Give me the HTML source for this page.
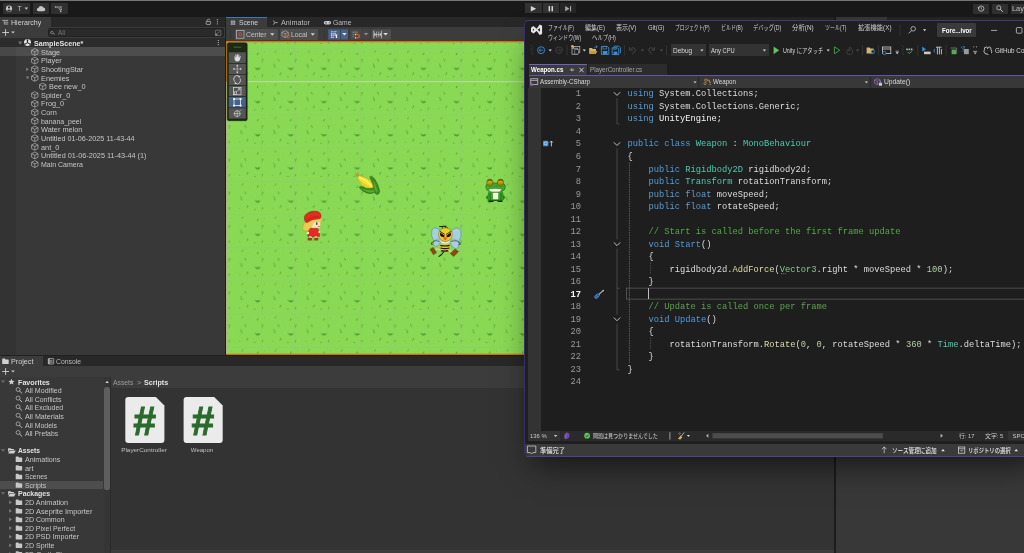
<!DOCTYPE html>
<html lang="ja"><head><meta charset="utf-8"><title>Unity - SampleScene / Visual Studio - Weapon.cs</title>
<style>
html,body{margin:0;padding:0;background:#383838;}
body{width:1024px;height:553px;overflow:hidden;}
#root{position:relative;width:1024px;height:553px;overflow:hidden;background:#383838;font-family:"Liberation Sans","Noto Sans CJK JP",sans-serif;}
.b{position:absolute;box-sizing:border-box;}
.t{position:absolute;white-space:pre;display:block;}
.u{font-family:"Liberation Sans","Noto Sans CJK JP",sans-serif;}
.v{font-family:"Liberation Sans","Noto Sans CJK JP",sans-serif;}
.m{font-family:"Liberation Mono","Noto Sans CJK JP",monospace;}
svg{position:absolute;overflow:visible;}
#txt{position:absolute;left:0;top:0;width:1024px;height:553px;will-change:transform;}

</style></head>
<body>
<div id="root">
<div class="b " style="left:0px;top:0px;width:1024px;height:17px;background:#191919;"></div>
<div class="b " style="left:0px;top:0px;width:1024px;height:1px;background:#767676;"></div>
<div class="b " style="left:2.9px;top:3.4px;width:27.1px;height:10.3px;background:#303030;border-radius:1px;"></div>
<div class="b " style="left:33px;top:3.4px;width:15.799999999999997px;height:10.3px;background:#303030;border-radius:1px;"></div>
<div class="b " style="left:51.3px;top:3.4px;width:16.299999999999997px;height:10.3px;background:#303030;border-radius:1px;"></div>
<div class="b " style="left:525.3px;top:3.4px;width:16.90000000000009px;height:10px;background:#323232;"></div>
<div class="b " style="left:542.9px;top:3.4px;width:16.399999999999977px;height:10px;background:#333333;"></div>
<div class="b " style="left:559.8px;top:3.4px;width:16.5px;height:10px;background:#262626;"></div>
<div class="b " style="left:973px;top:3.5px;width:16px;height:10.1px;background:#303030;border-radius:1px;"></div>
<div class="b " style="left:991.7px;top:3.5px;width:16.09999999999991px;height:10.1px;background:#303030;border-radius:1px;"></div>
<div class="b " style="left:1010.6px;top:3.5px;width:19.399999999999977px;height:10.1px;background:#303030;border-radius:1px;"></div>
<div class="b " style="left:0px;top:17px;width:225.5px;height:338px;background:#383838;"></div>
<div class="b " style="left:0px;top:17px;width:225.5px;height:10px;background:#282828;"></div>
<div class="b " style="left:0px;top:17px;width:51px;height:10px;background:#3c3c3c;"></div>
<div class="b " style="left:0px;top:27px;width:225.5px;height:11px;background:#3c3c3c;"></div>
<div class="b " style="left:48.3px;top:28.3px;width:176.2px;height:8.4px;background:#2a2a2a;border-radius:1.5px;border:0.5px solid #212121;"></div>
<div class="b " style="left:0px;top:38px;width:225.5px;height:8.6px;background:#2c2c2c;"></div>
<div class="b " style="left:0px;top:46.6px;width:15.6px;height:308.2px;background:#333333;"></div>
<div class="b " style="left:0px;top:46.6px;width:225.5px;height:9.2px;background:#4d4d4d;"></div>
<div class="b " style="left:0px;top:46.6px;width:15.6px;height:9.2px;background:#484848;"></div>
<div class="b " style="left:225.3px;top:17px;width:0.9px;height:338px;background:#1e1e1e;"></div>
<div class="b " style="left:226px;top:17px;width:610px;height:10px;background:#282828;"></div>
<div class="b " style="left:226px;top:17px;width:41px;height:10px;background:#3c3c3c;border-top:1px solid #3b78b8;"></div>
<div class="b " style="left:226px;top:26.7px;width:610px;height:14.4px;background:#3c3c3c;"></div>
<div class="b " style="left:234.5px;top:29.3px;width:43.1px;height:10.3px;background:#4e4e4e;border-radius:1px;"></div>
<div class="b " style="left:279.5px;top:29.3px;width:38.1px;height:10.3px;background:#4e4e4e;border-radius:1px;"></div>
<div id="scene" class="b" style="left:226px;top:41px;width:610px;height:314.2px;overflow:hidden;background:#8ad954;"><svg width="610" height="314.2" viewBox="226 41 610 314.2" style="left:0;top:0;"><defs><pattern id="grass" patternUnits="userSpaceOnUse" x="194.64999999999998" y="14.849999999999994" width="33.15" height="33.2"><rect width="33.2" height="33.2" fill="#8ad954"/><path d="M27 19.2 L28.6 21.4 L29.1 19.8 L29.9 21.8 L30.7 19.9 L31.2 21.5 L32.3 19.4" fill="none" stroke="#3d8a28" stroke-width="0.75" stroke-opacity="0.8"/><path d="M28.2 21.3 L31.4 21.3" stroke="#3d8a28" stroke-width="0.8" stroke-opacity="0.45"/><path d="M15.05 2.86 L14.25 4.34" stroke="#3d8a28" stroke-width="0.8" stroke-opacity="0.69" stroke-linecap="round"/><path d="M30.27 5.06 L29.53 6.54" stroke="#3d8a28" stroke-width="0.9" stroke-opacity="0.78" stroke-linecap="round"/><path d="M0.77 10.98 L1.33 12.22" stroke="#3d8a28" stroke-width="0.7" stroke-opacity="0.55" stroke-linecap="round"/><path d="M2.37 11.22 L1.63 12.58" stroke="#3d8a28" stroke-width="0.7" stroke-opacity="0.55" stroke-linecap="round"/><path d="M1.36 13.1 L1.24 14.1" stroke="#3d8a28" stroke-width="0.7" stroke-opacity="0.55" stroke-linecap="round"/><path d="M17.23 11.01 L17.97 12.99" stroke="#3d8a28" stroke-width="0.9" stroke-opacity="0.69" stroke-linecap="round"/><path d="M12.79 15.78 L13.41 17.02" stroke="#3d8a28" stroke-width="0.8" stroke-opacity="0.64" stroke-linecap="round"/><path d="M13.66 17.71 L13.84 19.39" stroke="#3d8a28" stroke-width="0.9" stroke-opacity="0.74" stroke-linecap="round"/><path d="M20.05 24.77 L19.25 26.63" stroke="#3d8a28" stroke-width="0.9" stroke-opacity="0.74" stroke-linecap="round"/><path d="M1.75 26.57 L1.25 28.43" stroke="#3d8a28" stroke-width="0.8" stroke-opacity="0.64" stroke-linecap="round"/><path d="M11.27 27.6 L12.13 27.6" stroke="#3d8a28" stroke-width="0.7" stroke-opacity="0.37" stroke-linecap="round"/><circle cx="27.1" cy="28.6" r="0.6" fill="#3d8a28" fill-opacity="0.85"/><circle cx="3.6" cy="3.9" r="0.5" fill="#3d8a28" fill-opacity="0.35"/><circle cx="22" cy="5.8" r="0.45" fill="#3d8a28" fill-opacity="0.3"/><circle cx="24.2" cy="14.2" r="0.45" fill="#3d8a28" fill-opacity="0.2"/><path d="M0 0.45 H33.2 M0.45 0 V33.2" stroke="#8cbe8c" stroke-opacity="0.33" stroke-width="0.9"/></pattern></defs><rect x="226" y="41" width="610" height="315" fill="url(#grass)"/><path d="M226 81.7 H836" stroke="#e8f5d8" stroke-opacity="0.55" stroke-width="0.9"/><path d="M226 41.6 H836" stroke="#e0690a" stroke-width="1.3"/><path d="M226 354.5 H836" stroke="#e0690a" stroke-width="1.3"/><path d="M226.4 41 V81.7" stroke="#e88a10" stroke-width="1.2"/><path d="M226.4 81.7 V354" stroke="#d9dc9a" stroke-width="1.1"/><path d="M225.9 41 V355" stroke="#2a2018" stroke-width="0.5"/><g id="girl">
<path d="M302.6 228.6 Q302.8 223.4 307.4 220.4 L312.4 219 L312.8 227 L309.4 229.6 Q307.6 230.2 307.2 231.2 Q303.6 231.4 302.6 228.6 Z" fill="#e9cb55" stroke="#c09a30" stroke-width="0.5"/>
<path d="M310.6 221.6 H320 Q320.8 225.4 319.4 228 L317 228.6 H312.6 Q310 226 310.6 221.6 Z" fill="#f8dfc2"/>
<path d="M309.8 221 L320.4 217.4 Q321.6 220.4 320.6 223.6 L319.2 221.2 Q315.4 220.6 313.2 223.4 Q312.8 226.4 311.4 227.4 Q309.6 225 309.8 221 Z" fill="#e9cb55"/>
<path d="M304.6 219.6 Q303.6 214.4 309 212.4 Q313.4 210.4 317.6 211.6 Q321.6 213 320.8 217.4 Q320.6 218.8 318.6 218.8 Q312 218.6 307.2 222.6 Q305 222.6 304.6 219.6 Z" fill="#e62a20" stroke="#9c1410" stroke-width="0.6"/>
<path d="M306.6 220.6 Q311.6 216.6 318.6 216.4" fill="none" stroke="#b01810" stroke-width="0.7"/>
<path d="M308.6 212.8 L310 211.4 L311.6 212.2 L310.2 213.4 Z" fill="#2f7a1c"/>
<rect x="316" y="222.2" width="1.5" height="2.7" rx="0.6" fill="#38466e"/>
<circle cx="318.9" cy="226.4" r="0.7" fill="#e0402c"/>
<path d="M310.2 228.4 L317.6 228.2 Q319.8 232 319.6 236.2 Q313.6 237.6 307.6 236.2 Q307.8 232 310.2 228.4 Z" fill="#e62a20" stroke="#a81812" stroke-width="0.5"/>
<circle cx="307.9" cy="232.9" r="1.2" fill="#fbeee0"/><circle cx="319.3" cy="231.9" r="1" fill="#fbeee0"/>
<rect x="309" y="236.4" width="2.6" height="1.6" fill="#f6efe6"/><rect x="314.6" y="236.4" width="2.6" height="1.6" fill="#f6efe6"/>
<path d="M307.4 238 Q309.6 237 312.2 238 L311.8 240.4 H308 Z" fill="#874a1c"/>
<path d="M314.2 238 Q316.4 237 318.4 238 L318 240.4 H314.6 Z" fill="#874a1c"/>
</g><g id="corn">
<path d="M355.2 172.8 L358.4 176 M357.6 172.6 L358.8 176 M355.2 175.4 L358.2 176.6" stroke="#c07a1e" stroke-width="0.8"/>
<path d="M369.7 176.8 L372 176.6 L374.6 178.8 Q378.6 184.6 379.8 191.6 Q379.4 194 377 194.6 Q375.4 194.2 374.4 192.4 Q370.4 194.4 366.6 193 Q361.6 191 359.2 187.4 L360 186.4 L367 187.4 L372.6 186.4 Q372.4 181.4 369.7 176.8 Z" fill="#3e8c20" stroke="#25601a" stroke-width="0.5"/>
<path d="M371.6 178.6 Q376.4 184.6 377.6 192.6 Q375.6 191 374.6 189 Q374.6 183 371.6 178.6 Z" fill="#58ae30"/>
<path d="M361.4 188.4 Q367.6 191.4 373.6 190.2 L374.2 192 Q367.6 193.4 361.4 188.4 Z" fill="#58ae30"/>
<path d="M357.6 176.6 Q358.6 175.4 361 176 Q367 177.6 370.4 180.8 Q373.4 184.4 373.2 187.4 Q370 188.6 366 187.8 Q361.4 185.6 359 181.4 Q357.4 178.6 357.6 176.6 Z" fill="#f3e32c" stroke="#b89018" stroke-width="0.5"/>
<path d="M359.6 177.4 Q366.6 179.8 371.6 186.6" stroke="#fbf6b0" stroke-width="1" fill="none"/>
<path d="M359.4 180.6 Q363.4 184.8 369 187" stroke="#d6b41e" stroke-width="0.8" fill="none"/>
</g><g id="frog">
<path d="M488.6 199.8 H502.4 V201.9 H497.6 V201 H493.4 V201.9 H488.6 Z" fill="#0c260c"/>
<circle cx="487.2" cy="197.4" r="1.3" fill="#2a8a1e"/><circle cx="503.8" cy="197.4" r="1.3" fill="#2a8a1e"/>
<path d="M489.6 190.4 Q487.6 194.6 487.6 198.4 Q487.6 200.4 489.4 200.4 H501.8 Q503.6 200.4 503.6 198.4 Q503.6 194.6 501.6 190.4 Z" fill="#36a424" stroke="#1c6414" stroke-width="0.6"/>
<path d="M485.9 186.9 Q485.9 183.2 490 183 H501 Q505.3 183.2 505.3 186.9 Q505.3 190.8 501 191 H490 Q485.9 190.8 485.9 186.9 Z" fill="#3cae28" stroke="#1c6414" stroke-width="0.6"/>
<rect x="486.9" y="179.3" width="5.8" height="6.6" rx="2.4" fill="#c9a212" stroke="#3c4a10" stroke-width="0.6"/>
<rect x="497.6" y="179.3" width="5.8" height="6.6" rx="2.4" fill="#c9a212" stroke="#3c4a10" stroke-width="0.6"/>
<path d="M487.6 183.4 H492 V184.4 Q489.8 186 487.6 184.4 Z M498.4 183.4 H502.8 V184.4 Q500.6 186 498.4 184.4 Z" fill="#a07c0a"/>
<path d="M487.8 180.6 Q489.8 179 491.8 180.6 M498.6 180.6 Q500.6 179 502.6 180.6" stroke="#2a3a10" stroke-width="0.8" fill="none"/>
<path d="M494.4 185.6 V186.8 M496.4 185.6 V186.8" stroke="#1c6414" stroke-width="0.5"/>
<path d="M488.7 189 Q495.3 187.9 501.8 189 Q501.6 191.9 498.4 191.9 H492 Q488.9 191.9 488.7 189 Z" fill="#f6f4e2" stroke="#1c6414" stroke-width="0.4"/>
<rect x="492.9" y="192.8" width="5.3" height="6.4" rx="0.4" fill="#fbfbe8"/>
<path d="M490.2 193 Q489.6 197 490.6 200.2 M500.9 193 Q501.6 197 500.6 200.2" stroke="#1c6414" stroke-width="0.7" fill="none"/>
</g><g id="bee">
<path d="M439.2 229.6 Q434 225.6 431.8 230.4 Q430.6 236.4 433.6 240.6 Q432.6 245.4 435.4 246.6 Q438.8 246.8 440.6 242 Z" fill="#a8d0dc" stroke="#4c8aa4" stroke-width="0.6"/>
<path d="M452 230 Q457.8 225.6 460.6 230.4 Q462.4 236.4 458.8 241.4 Q459.6 247.4 456.4 248.8 Q451.8 248 450.2 242.4 Z" fill="#a8d0dc" stroke="#4c8aa4" stroke-width="0.6"/>
<path d="M434.4 240.6 Q437.2 237.4 440 240 M457.4 240.6 Q454 237.4 450.6 240" fill="none" stroke="#6a8a9a" stroke-width="0.5"/>
<path d="M439.2 226.6 L446.6 226.2 M441.8 226.6 L443.2 229.4 M445.4 226.2 L445.6 229.4 M447 227 L447.4 229.4" stroke="#151515" stroke-width="0.9" fill="none"/>
<ellipse cx="445.4" cy="234.6" rx="6.9" ry="6.8" fill="#f0cc20" stroke="#7a6410" stroke-width="0.5"/>
<path d="M440 232.4 L444.6 235.6 L444.2 237.2 Q441.4 237.4 440.2 235.6 Z M451 232.4 L446.4 235.6 L446.8 237.2 Q449.6 237.4 450.8 235.6 Z" fill="#121212"/>
<path d="M440 231.4 L444.8 234.4 M451 231.4 L446.2 234.4" stroke="#121212" stroke-width="0.8"/>
<circle cx="445.2" cy="238.4" r="1.7" fill="#f2642a"/>
<path d="M439.8 239 Q440.6 241.4 443.4 241.8 Q445.4 242.6 447.4 241.8 Q449.8 241.4 450.4 239 Q451 243.6 445.2 244 Q439.4 243.6 439.8 239 Z" fill="#f6f6f2" stroke="#a8a8a0" stroke-width="0.4"/>
<path d="M440.4 243.8 Q445 245 449.4 243.8 Q450 248 448 251.8 Q444.6 253 441.6 251.6 Q439.8 248 440.4 243.8 Z" fill="#e9c42a"/>
<path d="M440.4 245.4 Q445 246.6 449.6 245.4 M440.4 248 Q445 249.2 449.4 248 M441.2 250.6 Q444.6 251.6 448.4 250.6" stroke="#161616" stroke-width="1.2" fill="none"/>
<path d="M439.6 241.4 Q433 239.4 432.2 243.4 M450.8 241.4 Q458.4 239.4 459.4 243.4" stroke="#303030" stroke-width="0.7" fill="none"/>
<path d="M431.4 242.2 V244.4 H433 M460.2 242.2 V244.4 H458.6" stroke="#303030" stroke-width="0.7" fill="none"/>
<path d="M440.6 250 L436.6 248.8 L435.4 250 M448.8 250.4 L452 251.4 L452.8 253" stroke="#ecd68a" stroke-width="1.1" fill="none"/>
<path d="M430 249.2 L433.2 247.4 L436.6 252.6 L433.4 254.8 Z" fill="#8a4a14" stroke="#5a2e0a" stroke-width="0.4"/>
<path d="M450.2 253.4 L455 249 L458.6 251.6 L453.6 256.6 Z" fill="#8a4a14" stroke="#5a2e0a" stroke-width="0.4"/>
<path d="M443.6 252 L441 255 L438.6 256.6" stroke="#161616" stroke-width="1.1" fill="none"/>
</g><rect x="227.2" y="42.8" width="20" height="77.9" rx="1.6" fill="#1c2a13" stroke="#141c0e" stroke-width="0.5"/><rect x="233.6" y="46.6" width="7.6" height="1.2" fill="#46573a"/><rect x="228.8" y="52.3" width="17" height="10.8" fill="#555555"/><rect x="228.8" y="63.8" width="17" height="10.3" fill="#555555"/><rect x="228.8" y="74.7" width="17" height="10.4" fill="#555555"/><rect x="228.8" y="85.8" width="17" height="10.5" fill="#555555"/><rect x="228.8" y="97" width="17" height="10.5" fill="#44628a"/><rect x="228.8" y="108.2" width="17" height="10.4" fill="#555555"/><path d="M234.4 56.6 L234.8 60.2 Q237 62.6 239.6 60.6 L240.8 56.4 L240 56 L239.4 58 L239.2 54.6 L238.4 54.6 L238.2 57.6 L237.6 54 L236.8 54 L236.8 57.6 L236 54.6 L235.2 54.8 L235.8 58.6 L235 56.4 Z" fill="#dcdcdc"/><path d="M237.3 65.6 V72.4 M233.8 69 H240.8" stroke="#dcdcdc" stroke-width="0.45"/><path d="M237.3 64.6 L238.5 66.2 H236.1 Z M237.3 73.4 L238.5 71.8 H236.1 Z M232.8 69 L234.4 67.8 V70.2 Z M241.8 69 L240.2 67.8 V70.2 Z" fill="#dcdcdc"/><path d="M234.6 81.6 A3.2 3.6 0 0 1 239.2 76.6 M240 78.4 A3.2 3.6 0 0 1 235.4 83.2" fill="none" stroke="#dcdcdc" stroke-width="0.8"/><path d="M238.4 75.6 L240.4 76.6 L238.8 78 Z M236.2 84.2 L234.2 83.2 L235.8 81.8 Z" fill="#dcdcdc"/><rect x="233.6" y="87.4" width="7.4" height="7.4" fill="none" stroke="#dcdcdc" stroke-width="0.7"/><rect x="234.3" y="91.8" width="2.4" height="2.4" fill="none" stroke="#dcdcdc" stroke-width="0.6"/><path d="M236.8 91.6 L239.8 88.6 M238 88.6 H239.8 V90.4" fill="none" stroke="#dcdcdc" stroke-width="0.7"/><rect x="234" y="99" width="6.6" height="6.6" fill="none" stroke="#ffffff" stroke-width="0.7"/><rect x="233.1" y="98.1" width="1.8" height="1.8" fill="#ffffff"/><rect x="233.1" y="104.69999999999999" width="1.8" height="1.8" fill="#ffffff"/><rect x="239.7" y="98.1" width="1.8" height="1.8" fill="#ffffff"/><rect x="239.7" y="104.69999999999999" width="1.8" height="1.8" fill="#ffffff"/><circle cx="237.2" cy="113.6" r="2.9" fill="none" stroke="#dcdcdc" stroke-width="0.6"/><path d="M237.2 110 V117.2 M233.6 113.6 H240.8 M239.4 111.4 L241.2 109.6" stroke="#dcdcdc" stroke-width="0.6" fill="none"/></svg></div>
<div class="b " style="left:0px;top:354.8px;width:1024px;height:1.5px;background:#202020;"></div>
<div class="b " style="left:0px;top:356.3px;width:834.7px;height:9.4px;background:#282828;"></div>
<div class="b " style="left:0px;top:356.3px;width:43px;height:9.4px;background:#3c3c3c;"></div>
<div class="b " style="left:0px;top:365.7px;width:834.7px;height:11.6px;background:#3c3c3c;"></div>
<div class="b " style="left:0px;top:377.3px;width:110.5px;height:176px;background:#383838;"></div>
<div class="b " style="left:110.5px;top:377.3px;width:724.2px;height:11.1px;background:#3c3c3c;"></div>
<div class="b " style="left:110.5px;top:388.4px;width:724.2px;height:162px;background:#333333;"></div>
<div class="b " style="left:110.5px;top:550.2px;width:724.2px;height:3px;background:#3c3c3c;"></div>
<div class="b " style="left:103.6px;top:377.3px;width:6.6px;height:176px;background:#353535;"></div>
<div class="b " style="left:104.4px;top:386.5px;width:5.3px;height:103.3px;background:#5e5e5e;border-radius:2.6px;"></div>
<div class="b " style="left:110.2px;top:377.3px;width:0.6px;height:176px;background:#2a2a2a;"></div>
<div class="b " style="left:0px;top:480.6px;width:103.3px;height:8.4px;background:#4d4d4d;"></div>
<div class="b " style="left:834.0px;top:17px;width:1.5px;height:536px;background:#1c1c1c;"></div>
<div class="b " style="left:836.2px;top:17px;width:190px;height:536px;background:#383838;"></div>
<div class="b " style="left:836.2px;top:17px;width:190px;height:10px;background:#282828;"></div>
<div class="b " style="left:836.2px;top:17px;width:51px;height:10px;background:#3c3c3c;"></div>
<div id="vs" class="b" style="left:524.4px;top:19.8px;width:520px;height:437.3px;background:#1f1f1f;border:1px solid #4d4490;border-top:1.7px solid #433b7a;border-left-color:#373062;border-radius:4.5px;box-shadow:0 16px 30px -9px rgba(0,0,0,0.62);overflow:hidden;"></div>
<div class="b " style="left:529px;top:63.8px;width:58.2px;height:11px;background:#3b3b3b;border-top:1px solid #7160c8;"></div>
<div class="b " style="left:587.5px;top:64.3px;width:79.5px;height:10.5px;background:#2c2c2c;"></div>
<div class="b " style="left:529px;top:74.8px;width:500px;height:1.6px;background:#6254b5;"></div>
<div class="b " style="left:529px;top:76.4px;width:500px;height:11.6px;background:#383838;"></div>
<div class="b " style="left:528.2px;top:88px;width:13px;height:343px;background:#333333;"></div>
<div class="b " style="left:541px;top:88px;width:490px;height:343px;background:#1e1e1e;"></div>
<div class="b " style="left:528.2px;top:431px;width:500px;height:9.8px;background:#2a2a2a;"></div>
<div class="b " style="left:528.2px;top:431.4px;width:32.3px;height:9.2px;background:#333333;"></div>
<div class="b " style="left:525.4px;top:443.8px;width:500px;height:12.5px;background:#3a3a3a;border-bottom-left-radius:4px;"></div>
<div class="b " style="left:671px;top:44.3px;width:35px;height:11.6px;background:#333333;"></div>
<div class="b " style="left:709px;top:44.3px;width:60px;height:11.6px;background:#333333;"></div>
<div class="b " style="left:937.2px;top:23.2px;width:38.5px;height:13.7px;background:#3a3a3a;border-radius:1px;"></div>
<div class="b " style="left:1008px;top:431.4px;width:20px;height:9px;background:#333333;"></div>
<div class="b " style="left:525px;top:17px;width:500px;height:2.8px;background:rgba(0,0,0,0.08);"></div>
<div id="txt">
<span id="t1" class="t u" style="top:4.0px;font-size:7px;line-height:9.8px;color:#c0c0c0;left:17.5px;transform-origin:0 50%;">T</span>
<span id="t2" class="t u" style="top:4.2px;font-size:7px;line-height:9.8px;color:#c0c0c0;left:1012.3px;transform-origin:0 50%;transform:scaleX(1.045);">Layout</span>
<span id="t3" class="t u" style="top:17.8px;font-size:7px;line-height:9.8px;color:#d2d2d2;left:10.7px;transform-origin:0 50%;transform:scaleX(1.0116);">Hierarchy</span>
<span id="t4" class="t u" style="top:28.2px;font-size:7px;line-height:9.8px;color:#777777;left:58px;transform-origin:0 50%;transform:scaleX(0.8996);">All</span>
<span id="t5" class="t u" style="top:38.8px;font-size:7px;line-height:9.8px;color:#e4e4e4;font-weight:700;left:33.7px;transform-origin:0 50%;transform:scaleX(1.0218);">SampleScene*</span>
<span id="t6" class="t u" style="top:47.7px;font-size:7px;line-height:9.8px;color:#c6c6c6;left:40.6px;transform-origin:0 50%;transform:scaleX(1.045);">Stage</span>
<span id="t7" class="t u" style="top:56.32px;font-size:7px;line-height:9.8px;color:#c6c6c6;left:40.6px;transform-origin:0 50%;transform:scaleX(1.045);">Player</span>
<span id="t8" class="t u" style="top:64.94px;font-size:7px;line-height:9.8px;color:#c6c6c6;left:40.6px;transform-origin:0 50%;transform:scaleX(1.045);">ShootingStar</span>
<span id="t9" class="t u" style="top:73.56px;font-size:7px;line-height:9.8px;color:#c6c6c6;left:40.6px;transform-origin:0 50%;transform:scaleX(1.045);">Enemies</span>
<span id="t10" class="t u" style="top:82.18px;font-size:7px;line-height:9.8px;color:#c6c6c6;left:48.5px;transform-origin:0 50%;transform:scaleX(1.045);">Bee new_0</span>
<span id="t11" class="t u" style="top:90.8px;font-size:7px;line-height:9.8px;color:#c6c6c6;left:40.6px;transform-origin:0 50%;transform:scaleX(1.045);">Spider_0</span>
<span id="t12" class="t u" style="top:99.42px;font-size:7px;line-height:9.8px;color:#c6c6c6;left:40.6px;transform-origin:0 50%;transform:scaleX(1.045);">Frog_0</span>
<span id="t13" class="t u" style="top:108.04px;font-size:7px;line-height:9.8px;color:#c6c6c6;left:40.6px;transform-origin:0 50%;transform:scaleX(1.045);">Corn</span>
<span id="t14" class="t u" style="top:116.66px;font-size:7px;line-height:9.8px;color:#c6c6c6;left:40.6px;transform-origin:0 50%;transform:scaleX(0.9951);">banana_peel</span>
<span id="t15" class="t u" style="top:125.28px;font-size:7px;line-height:9.8px;color:#c6c6c6;left:40.6px;transform-origin:0 50%;transform:scaleX(1.0502);">Water melon</span>
<span id="t16" class="t u" style="top:133.9px;font-size:7px;line-height:9.8px;color:#c6c6c6;left:40.6px;transform-origin:0 50%;transform:scaleX(1.0293);">Untitled 01-06-2025 11-43-44</span>
<span id="t17" class="t u" style="top:142.52px;font-size:7px;line-height:9.8px;color:#c6c6c6;left:40.6px;transform-origin:0 50%;transform:scaleX(1.045);">ant_0</span>
<span id="t18" class="t u" style="top:151.14px;font-size:7px;line-height:9.8px;color:#c6c6c6;left:40.6px;transform-origin:0 50%;transform:scaleX(1.04);">Untitled 01-06-2025 11-43-44 (1)</span>
<span id="t19" class="t u" style="top:159.76px;font-size:7px;line-height:9.8px;color:#c6c6c6;left:40.6px;transform-origin:0 50%;transform:scaleX(0.9972);">Main Camera</span>
<span id="t20" class="t u" style="top:17.9px;font-size:7px;line-height:9.8px;color:#d2d2d2;left:238.9px;transform-origin:0 50%;transform:scaleX(0.9618);">Scene</span>
<span id="t21" class="t u" style="top:17.9px;font-size:7px;line-height:9.8px;color:#bdbdbd;left:280.75px;transform-origin:0 50%;transform:scaleX(1.028);">Animator</span>
<span id="t22" class="t u" style="top:17.9px;font-size:7px;line-height:9.8px;color:#bdbdbd;left:332.9px;transform-origin:0 50%;transform:scaleX(0.9652);">Game</span>
<span id="t23" class="t u" style="top:29.8px;font-size:7px;line-height:9.8px;color:#c4c4c4;left:246px;transform-origin:0 50%;transform:scaleX(0.9707);">Center</span>
<span id="t24" class="t u" style="top:29.8px;font-size:7px;line-height:9.8px;color:#c4c4c4;left:291px;transform-origin:0 50%;transform:scaleX(0.974);">Local</span>
<span id="t25" class="t u" style="top:356.7px;font-size:7px;line-height:9.8px;color:#d2d2d2;left:10.6px;transform-origin:0 50%;transform:scaleX(1.0323);">Project</span>
<span id="t26" class="t u" style="top:356.7px;font-size:7px;line-height:9.8px;color:#bdbdbd;left:55.9px;transform-origin:0 50%;transform:scaleX(0.9771);">Console</span>
<span id="t27" class="t u" style="top:377.6px;font-size:7px;line-height:9.8px;color:#e0e0e0;font-weight:700;left:17.9px;transform-origin:0 50%;transform:scaleX(1.0233);">Favorites</span>
<span id="t28" class="t u" style="top:386.2px;font-size:7px;line-height:9.8px;color:#c6c6c6;left:24.6px;transform-origin:0 50%;transform:scaleX(1.0114);">All Modified</span>
<span id="t29" class="t u" style="top:394.8px;font-size:7px;line-height:9.8px;color:#c6c6c6;left:24.6px;transform-origin:0 50%;transform:scaleX(0.9951);">All Conflicts</span>
<span id="t30" class="t u" style="top:403.4px;font-size:7px;line-height:9.8px;color:#c6c6c6;left:24.6px;transform-origin:0 50%;transform:scaleX(0.9888);">All Excluded</span>
<span id="t31" class="t u" style="top:412.0px;font-size:7px;line-height:9.8px;color:#c6c6c6;left:24.6px;transform-origin:0 50%;transform:scaleX(1.0203);">All Materials</span>
<span id="t32" class="t u" style="top:420.6px;font-size:7px;line-height:9.8px;color:#c6c6c6;left:24.6px;transform-origin:0 50%;transform:scaleX(0.9908);">All Models</span>
<span id="t33" class="t u" style="top:429.2px;font-size:7px;line-height:9.8px;color:#c6c6c6;left:24.6px;transform-origin:0 50%;transform:scaleX(0.9805);">All Prefabs</span>
<span id="t34" class="t u" style="top:446.4px;font-size:7px;line-height:9.8px;color:#e0e0e0;font-weight:700;left:17.9px;transform-origin:0 50%;transform:scaleX(0.9578);">Assets</span>
<span id="t35" class="t u" style="top:455.0px;font-size:7px;line-height:9.8px;color:#c6c6c6;left:24.6px;transform-origin:0 50%;transform:scaleX(1.019);">Animations</span>
<span id="t36" class="t u" style="top:463.6px;font-size:7px;line-height:9.8px;color:#c6c6c6;left:24.6px;transform-origin:0 50%;transform:scaleX(1.0402);">art</span>
<span id="t37" class="t u" style="top:472.2px;font-size:7px;line-height:9.8px;color:#c6c6c6;left:24.6px;transform-origin:0 50%;transform:scaleX(0.9546);">Scenes</span>
<span id="t38" class="t u" style="top:480.8px;font-size:7px;line-height:9.8px;color:#c6c6c6;left:24.6px;transform-origin:0 50%;transform:scaleX(0.9904);">Scripts</span>
<span id="t39" class="t u" style="top:489.4px;font-size:7px;line-height:9.8px;color:#e0e0e0;font-weight:700;left:17.9px;transform-origin:0 50%;transform:scaleX(0.9934);">Packages</span>
<span id="t40" class="t u" style="top:498.0px;font-size:7px;line-height:9.8px;color:#c6c6c6;left:24.6px;transform-origin:0 50%;transform:scaleX(1.035);">2D Animation</span>
<span id="t41" class="t u" style="top:506.6px;font-size:7px;line-height:9.8px;color:#c6c6c6;left:24.6px;transform-origin:0 50%;transform:scaleX(1.0498);">2D Aseprite Importer</span>
<span id="t42" class="t u" style="top:515.2px;font-size:7px;line-height:9.8px;color:#c6c6c6;left:24.6px;transform-origin:0 50%;transform:scaleX(1.0077);">2D Common</span>
<span id="t43" class="t u" style="top:523.8px;font-size:7px;line-height:9.8px;color:#c6c6c6;left:24.6px;transform-origin:0 50%;transform:scaleX(0.9983);">2D Pixel Perfect</span>
<span id="t44" class="t u" style="top:532.4px;font-size:7px;line-height:9.8px;color:#c6c6c6;left:24.6px;transform-origin:0 50%;transform:scaleX(1.0151);">2D PSD Importer</span>
<span id="t45" class="t u" style="top:541.0px;font-size:7px;line-height:9.8px;color:#c6c6c6;left:24.6px;transform-origin:0 50%;transform:scaleX(1.0073);">2D Sprite</span>
<span id="t46" class="t u" style="top:549.6px;font-size:7px;line-height:9.8px;color:#c6c6c6;left:24.6px;transform-origin:0 50%;transform:scaleX(1.045);">2D SpriteShape</span>
<span id="t47" class="t u" style="top:378.0px;font-size:7px;line-height:9.8px;color:#9c9c9c;left:113.3px;transform-origin:0 50%;transform:scaleX(0.9707);">Assets</span>
<span id="t48" class="t u" style="top:377.8px;font-size:7px;line-height:9.8px;color:#9c9c9c;left:137.3px;transform-origin:0 50%;transform:scaleX(1.045);">&gt;</span>
<span id="t49" class="t u" style="top:378.0px;font-size:7px;line-height:9.8px;color:#e0e0e0;font-weight:700;left:143.75px;transform-origin:0 50%;transform:scaleX(1.0196);">Scripts</span>
<span id="t50" class="t u" style="top:446.81px;font-size:5.7px;line-height:7.98px;color:#c0c0c0;left:-56px;width:400px;text-align:center;transform-origin:50% 50%;transform:scaleX(1.1182);">PlayerController</span>
<span id="t51" class="t u" style="top:446.81px;font-size:5.7px;line-height:7.98px;color:#c0c0c0;left:2.1999999999999886px;width:400px;text-align:center;transform-origin:50% 50%;transform:scaleX(1.0619);">Weapon</span>
<span id="t52" class="t v" style="top:23.62px;font-size:6.4px;line-height:8.96px;color:#cfcfcf;left:548px;transform-origin:0 50%;transform:scaleX(0.7678);">ファイル(F)</span>
<span id="t53" class="t v" style="top:23.62px;font-size:6.4px;line-height:8.96px;color:#cfcfcf;left:585px;transform-origin:0 50%;transform:scaleX(0.9384);">編集(E)</span>
<span id="t54" class="t v" style="top:23.62px;font-size:6.4px;line-height:8.96px;color:#cfcfcf;left:616.1px;transform-origin:0 50%;transform:scaleX(0.9525);">表示(V)</span>
<span id="t55" class="t v" style="top:23.62px;font-size:6.4px;line-height:8.96px;color:#cfcfcf;left:647.8px;transform-origin:0 50%;transform:scaleX(0.9364);">Git(G)</span>
<span id="t56" class="t v" style="top:23.62px;font-size:6.4px;line-height:8.96px;color:#cfcfcf;left:675.2px;transform-origin:0 50%;transform:scaleX(0.7381);">プロジェクト(P)</span>
<span id="t57" class="t v" style="top:23.62px;font-size:6.4px;line-height:8.96px;color:#cfcfcf;left:720.6px;transform-origin:0 50%;transform:scaleX(0.7797);">ビルド(B)</span>
<span id="t58" class="t v" style="top:23.62px;font-size:6.4px;line-height:8.96px;color:#cfcfcf;left:753.1px;transform-origin:0 50%;transform:scaleX(0.8174);">デバッグ(D)</span>
<span id="t59" class="t v" style="top:23.62px;font-size:6.4px;line-height:8.96px;color:#cfcfcf;left:792.25px;transform-origin:0 50%;transform:scaleX(1.0043);">分析(N)</span>
<span id="t60" class="t v" style="top:23.62px;font-size:6.4px;line-height:8.96px;color:#cfcfcf;left:825px;transform-origin:0 50%;transform:scaleX(0.7863);">ツール(T)</span>
<span id="t61" class="t v" style="top:23.62px;font-size:6.4px;line-height:8.96px;color:#cfcfcf;left:857.75px;transform-origin:0 50%;transform:scaleX(0.9826);">拡張機能(X)</span>
<span id="t62" class="t v" style="top:34.02px;font-size:6.4px;line-height:8.96px;color:#cfcfcf;left:548px;transform-origin:0 50%;transform:scaleX(0.7882);">ウィンドウ(W)</span>
<span id="t63" class="t v" style="top:34.02px;font-size:6.4px;line-height:8.96px;color:#cfcfcf;left:592.3px;transform-origin:0 50%;transform:scaleX(0.8486);">ヘルプ(H)</span>
<span id="t64" class="t v" style="top:25.78px;font-size:6.6px;line-height:9.24px;color:#ffffff;font-weight:700;left:941.7px;transform-origin:0 50%;transform:scaleX(0.9313);">Fore...ivor</span>
<span id="t65" class="t v" style="top:46.79px;font-size:6.3px;line-height:8.82px;color:#d8d8d8;left:673.1px;transform-origin:0 50%;transform:scaleX(1.0343);">Debug</span>
<span id="t66" class="t v" style="top:46.79px;font-size:6.3px;line-height:8.82px;color:#d8d8d8;left:711.25px;transform-origin:0 50%;transform:scaleX(0.9187);">Any CPU</span>
<span id="t67" class="t v" style="top:46.79px;font-size:6.3px;line-height:8.82px;color:#d8d8d8;left:783.1px;transform-origin:0 50%;transform:scaleX(0.8489);">Unity にアタッチ</span>
<span id="t68" class="t v" style="top:46.79px;font-size:6.3px;line-height:8.82px;color:#d8d8d8;left:995px;transform-origin:0 50%;transform:scaleX(1.0011);">GitHub Copilot</span>
<span id="t69" class="t v" style="top:66.42px;font-size:6.4px;line-height:8.96px;color:#ffffff;font-weight:700;left:530.6px;transform-origin:0 50%;transform:scaleX(0.9636);">Weapon.cs</span>
<span id="t70" class="t v" style="top:66.49px;font-size:6.3px;line-height:8.82px;color:#a8a8a8;left:590px;transform-origin:0 50%;transform:scaleX(0.9875);">PlayerController.cs</span>
<span id="t71" class="t v" style="top:78.39px;font-size:6.3px;line-height:8.82px;color:#dadada;left:540px;transform-origin:0 50%;transform:scaleX(0.9852);">Assembly-CSharp</span>
<span id="t72" class="t v" style="top:78.39px;font-size:6.3px;line-height:8.82px;color:#dadada;left:712.5px;transform-origin:0 50%;transform:scaleX(0.9853);">Weapon</span>
<span id="t73" class="t v" style="top:78.39px;font-size:6.3px;line-height:8.82px;color:#dadada;left:883.8px;transform-origin:0 50%;transform:scaleX(1.0694);">Update()</span>
<span id="t74" class="t v" style="top:432.4px;font-size:6px;line-height:8.4px;color:#c8c8c8;left:530.4px;transform-origin:0 50%;transform:scaleX(0.9873);">136 %</span>
<span id="t75" class="t v" style="top:432.36px;font-size:6.2px;line-height:8.68px;color:#d0d0d0;left:593.3px;transform-origin:0 50%;transform:scaleX(0.8117);">問題は見つかりませんでした</span>
<span id="t76" class="t v" style="top:432.4px;font-size:6px;line-height:8.4px;color:#c8c8c8;left:958.6px;transform-origin:0 50%;transform:scaleX(0.9616);">行: 17</span>
<span id="t77" class="t v" style="top:432.4px;font-size:6px;line-height:8.4px;color:#c8c8c8;left:984.6px;transform-origin:0 50%;transform:scaleX(0.9854);">文字: 5</span>
<span id="t78" class="t v" style="top:432.4px;font-size:6px;line-height:8.4px;color:#c8c8c8;left:1012.6px;transform-origin:0 50%;">SPC</span>
<span id="t79" class="t v" style="top:446.59px;font-size:6.3px;line-height:8.82px;color:#e8e8e8;font-weight:500;left:540.2px;transform-origin:0 50%;transform:scaleX(0.9926);">準備完了</span>
<span id="t80" class="t v" style="top:446.59px;font-size:6.3px;line-height:8.82px;color:#e8e8e8;font-weight:500;left:892px;transform-origin:0 50%;transform:scaleX(0.8929);">ソース管理に追加</span>
<span id="t81" class="t v" style="top:446.59px;font-size:6.3px;line-height:8.82px;color:#e8e8e8;font-weight:500;left:968px;transform-origin:0 50%;transform:scaleX(0.8476);">リポジトリの選択</span>
<span id="t82" class="t m" style="top:88.38px;font-size:8.75px;line-height:12.25px;color:#9a9a9a;right:443px;transform-origin:100% 50%;">1</span>
<span id="t83" class="t m" style="top:88.38px;font-size:8.75px;line-height:12.25px;color:#dcdcdc;left:627.5px;transform-origin:0 50%;"><span style="color:#569cd6">using</span><span style="color:#dcdcdc"> System.Collections;</span></span>
<span id="t84" class="t m" style="top:100.89px;font-size:8.75px;line-height:12.25px;color:#9a9a9a;right:443px;transform-origin:100% 50%;">2</span>
<span id="t85" class="t m" style="top:100.89px;font-size:8.75px;line-height:12.25px;color:#dcdcdc;left:627.5px;transform-origin:0 50%;"><span style="color:#569cd6">using</span><span style="color:#dcdcdc"> System.Collections.Generic;</span></span>
<span id="t86" class="t m" style="top:113.42px;font-size:8.75px;line-height:12.25px;color:#9a9a9a;right:443px;transform-origin:100% 50%;">3</span>
<span id="t87" class="t m" style="top:113.42px;font-size:8.75px;line-height:12.25px;color:#dcdcdc;left:627.5px;transform-origin:0 50%;"><span style="color:#569cd6">using</span><span style="color:#f4f4f4"> UnityEngine;</span></span>
<span id="t88" class="t m" style="top:125.94px;font-size:8.75px;line-height:12.25px;color:#9a9a9a;right:443px;transform-origin:100% 50%;">4</span>
<span id="t89" class="t m" style="top:138.45px;font-size:8.75px;line-height:12.25px;color:#9a9a9a;right:443px;transform-origin:100% 50%;">5</span>
<span id="t90" class="t m" style="top:138.45px;font-size:8.75px;line-height:12.25px;color:#dcdcdc;left:627.5px;transform-origin:0 50%;"><span style="color:#569cd6">public class </span><span style="color:#4ec9b0">Weapon</span><span style="color:#dcdcdc"> : </span><span style="color:#4ec9b0">MonoBehaviour</span></span>
<span id="t91" class="t m" style="top:150.97px;font-size:8.75px;line-height:12.25px;color:#9a9a9a;right:443px;transform-origin:100% 50%;">6</span>
<span id="t92" class="t m" style="top:150.97px;font-size:8.75px;line-height:12.25px;color:#dcdcdc;left:627.5px;transform-origin:0 50%;"><span style="color:#dcdcdc">{</span></span>
<span id="t93" class="t m" style="top:163.5px;font-size:8.75px;line-height:12.25px;color:#9a9a9a;right:443px;transform-origin:100% 50%;">7</span>
<span id="t94" class="t m" style="top:163.5px;font-size:8.75px;line-height:12.25px;color:#dcdcdc;left:627.5px;transform-origin:0 50%;"><span style="color:#569cd6">    public </span><span style="color:#4ec9b0">Rigidbody2D</span><span style="color:#dcdcdc"> rigidbody2d;</span></span>
<span id="t95" class="t m" style="top:176.01px;font-size:8.75px;line-height:12.25px;color:#9a9a9a;right:443px;transform-origin:100% 50%;">8</span>
<span id="t96" class="t m" style="top:176.01px;font-size:8.75px;line-height:12.25px;color:#dcdcdc;left:627.5px;transform-origin:0 50%;"><span style="color:#569cd6">    public </span><span style="color:#4ec9b0">Transform</span><span style="color:#dcdcdc"> rotationTransform;</span></span>
<span id="t97" class="t m" style="top:188.53px;font-size:8.75px;line-height:12.25px;color:#9a9a9a;right:443px;transform-origin:100% 50%;">9</span>
<span id="t98" class="t m" style="top:188.53px;font-size:8.75px;line-height:12.25px;color:#dcdcdc;left:627.5px;transform-origin:0 50%;"><span style="color:#569cd6">    public float</span><span style="color:#dcdcdc"> moveSpeed;</span></span>
<span id="t99" class="t m" style="top:201.05px;font-size:8.75px;line-height:12.25px;color:#9a9a9a;right:443px;transform-origin:100% 50%;">10</span>
<span id="t100" class="t m" style="top:201.05px;font-size:8.75px;line-height:12.25px;color:#dcdcdc;left:627.5px;transform-origin:0 50%;"><span style="color:#569cd6">    public float</span><span style="color:#dcdcdc"> rotateSpeed;</span></span>
<span id="t101" class="t m" style="top:213.57px;font-size:8.75px;line-height:12.25px;color:#9a9a9a;right:443px;transform-origin:100% 50%;">11</span>
<span id="t102" class="t m" style="top:226.09px;font-size:8.75px;line-height:12.25px;color:#9a9a9a;right:443px;transform-origin:100% 50%;">12</span>
<span id="t103" class="t m" style="top:226.09px;font-size:8.75px;line-height:12.25px;color:#dcdcdc;left:627.5px;transform-origin:0 50%;"><span style="color:#57a64a">    // Start is called before the first frame update</span></span>
<span id="t104" class="t m" style="top:238.62px;font-size:8.75px;line-height:12.25px;color:#9a9a9a;right:443px;transform-origin:100% 50%;">13</span>
<span id="t105" class="t m" style="top:238.62px;font-size:8.75px;line-height:12.25px;color:#dcdcdc;left:627.5px;transform-origin:0 50%;"><span style="color:#569cd6">    void </span><span style="color:#4f9be0">Start</span><span style="color:#dcdcdc">()</span></span>
<span id="t106" class="t m" style="top:251.13px;font-size:8.75px;line-height:12.25px;color:#9a9a9a;right:443px;transform-origin:100% 50%;">14</span>
<span id="t107" class="t m" style="top:251.13px;font-size:8.75px;line-height:12.25px;color:#dcdcdc;left:627.5px;transform-origin:0 50%;"><span style="color:#dcdcdc">    {</span></span>
<span id="t108" class="t m" style="top:263.65px;font-size:8.75px;line-height:12.25px;color:#9a9a9a;right:443px;transform-origin:100% 50%;">15</span>
<span id="t109" class="t m" style="top:263.65px;font-size:8.75px;line-height:12.25px;color:#dcdcdc;left:627.5px;transform-origin:0 50%;"><span style="color:#dcdcdc">        rigidbody2d.</span><span style="color:#dcdcaa">AddForce</span><span style="color:#dcdcdc">(</span><span style="color:#86c691">Vector3</span><span style="color:#dcdcdc">.right * moveSpeed * </span><span style="color:#b5cea8">100</span><span style="color:#dcdcdc">);</span></span>
<span id="t110" class="t m" style="top:276.17px;font-size:8.75px;line-height:12.25px;color:#9a9a9a;right:443px;transform-origin:100% 50%;">16</span>
<span id="t111" class="t m" style="top:276.17px;font-size:8.75px;line-height:12.25px;color:#dcdcdc;left:627.5px;transform-origin:0 50%;"><span style="color:#dcdcdc">    }</span></span>
<span id="t112" class="t m" style="top:288.69px;font-size:8.75px;line-height:12.25px;color:#ffffff;font-weight:700;right:443px;transform-origin:100% 50%;">17</span>
<span id="t113" class="t m" style="top:301.21px;font-size:8.75px;line-height:12.25px;color:#9a9a9a;right:443px;transform-origin:100% 50%;">18</span>
<span id="t114" class="t m" style="top:301.21px;font-size:8.75px;line-height:12.25px;color:#dcdcdc;left:627.5px;transform-origin:0 50%;"><span style="color:#57a64a">    // Update is called once per frame</span></span>
<span id="t115" class="t m" style="top:313.73px;font-size:8.75px;line-height:12.25px;color:#9a9a9a;right:443px;transform-origin:100% 50%;">19</span>
<span id="t116" class="t m" style="top:313.73px;font-size:8.75px;line-height:12.25px;color:#dcdcdc;left:627.5px;transform-origin:0 50%;"><span style="color:#569cd6">    void </span><span style="color:#4f9be0">Update</span><span style="color:#dcdcdc">()</span></span>
<span id="t117" class="t m" style="top:326.25px;font-size:8.75px;line-height:12.25px;color:#9a9a9a;right:443px;transform-origin:100% 50%;">20</span>
<span id="t118" class="t m" style="top:326.25px;font-size:8.75px;line-height:12.25px;color:#dcdcdc;left:627.5px;transform-origin:0 50%;"><span style="color:#dcdcdc">    {</span></span>
<span id="t119" class="t m" style="top:338.77px;font-size:8.75px;line-height:12.25px;color:#9a9a9a;right:443px;transform-origin:100% 50%;">21</span>
<span id="t120" class="t m" style="top:338.77px;font-size:8.75px;line-height:12.25px;color:#dcdcdc;left:627.5px;transform-origin:0 50%;"><span style="color:#dcdcdc">        rotationTransform.</span><span style="color:#dcdcaa">Rotate</span><span style="color:#dcdcdc">(</span><span style="color:#b5cea8">0</span><span style="color:#dcdcdc">, </span><span style="color:#b5cea8">0</span><span style="color:#dcdcdc">, rotateSpeed * </span><span style="color:#b5cea8">360</span><span style="color:#dcdcdc"> * </span><span style="color:#4ec9b0">Time</span><span style="color:#dcdcdc">.deltaTime);</span></span>
<span id="t121" class="t m" style="top:351.3px;font-size:8.75px;line-height:12.25px;color:#9a9a9a;right:443px;transform-origin:100% 50%;">22</span>
<span id="t122" class="t m" style="top:351.3px;font-size:8.75px;line-height:12.25px;color:#dcdcdc;left:627.5px;transform-origin:0 50%;"><span style="color:#dcdcdc">    }</span></span>
<span id="t123" class="t m" style="top:363.81px;font-size:8.75px;line-height:12.25px;color:#9a9a9a;right:443px;transform-origin:100% 50%;">23</span>
<span id="t124" class="t m" style="top:363.81px;font-size:8.75px;line-height:12.25px;color:#dcdcdc;left:627.5px;transform-origin:0 50%;"><span style="color:#dcdcdc">}</span></span>
<span id="t125" class="t m" style="top:376.33px;font-size:8.75px;line-height:12.25px;color:#9a9a9a;right:443px;transform-origin:100% 50%;">24</span>
</div>
<svg id="icons" width="1024" height="553" viewBox="0 0 1024 553" style="left:0;top:0;"><circle cx="9" cy="8.5" r="3.1" fill="#c6c6c6"/><circle cx="9" cy="7.4" r="1.15" fill="#303030"/><path d="M6.9 10.6 Q9 8.3 11.1 10.6 Q9 12.2 6.9 10.6 Z" fill="#303030"/><path d="M24.5 7.55 H28.1 L26.3 9.65 Z" fill="#c6c6c6"/><path d="M38.4 11.2 Q36.8 11.2 36.8 9.6 Q36.8 8.2 38.4 8.1 Q38.8 5.9 41 5.9 Q42.8 5.9 43.4 7.6 Q45.2 7.7 45.2 9.5 Q45.2 11.2 43.6 11.2 Z" fill="#c6c6c6"/><path d="M55.4 7 H57.4 L59.4 9 H60.6 M57.4 7 H60.4 M59.6 9.2 L60.6 11" fill="none" stroke="#b8b8b8" stroke-width="0.7"/><circle cx="55.6" cy="7" r="0.8" fill="#b8b8b8"/><circle cx="61" cy="7" r="0.8" fill="#b8b8b8"/><circle cx="61.2" cy="9.2" r="0.8" fill="#b8b8b8"/><circle cx="60.8" cy="11.4" r="0.8" fill="#b8b8b8"/><path d="M530.8 5.9 V11.5 L536.2 8.7 Z" fill="#d6d6d6"/><rect x="548.6" y="6.1" width="1.5" height="5.2" fill="#d6d6d6"/><rect x="551.5" y="6.1" width="1.5" height="5.2" fill="#d6d6d6"/><path d="M565.2 6.1 V11.3 L569.6 8.7 Z" fill="#a4a4a4"/><rect x="570" y="6.1" width="1.1" height="5.2" fill="#a4a4a4"/><circle cx="981.2" cy="8.6" r="2.7" fill="none" stroke="#c6c6c6" stroke-width="0.8"/><path d="M981.2 7 V8.8 L982.4 9.6" fill="none" stroke="#c6c6c6" stroke-width="0.7"/><path d="M977.6 7 L978.4 9 L980 7.8 Z" fill="#c6c6c6"/><circle cx="998.8" cy="7.8" r="2.1" fill="none" stroke="#c6c6c6" stroke-width="0.8"/><path d="M1000.4 9.4 L1002.6 11.6" stroke="#c6c6c6" stroke-width="1" stroke-linecap="round"/><path d="M2.2 20.4 H8.2 M4 22.2 H8.2 M4 24 H8.2" stroke="#c0c0c0" stroke-width="0.8"/><path d="M4.2 20.8 V24" stroke="#c0c0c0" stroke-width="0.5"/><rect x="206.2" y="21.4" width="4.4" height="3" rx="0.5" fill="none" stroke="#c4c4c4" stroke-width="0.7"/><path d="M207.2 21.4 V20.4 Q207.2 19.2 208.6 19.2 Q209.8 19.2 210 20.2" fill="none" stroke="#c4c4c4" stroke-width="0.7"/><rect x="216.9" y="19.2" width="1" height="1" fill="#c4c4c4"/><rect x="216.9" y="21.3" width="1" height="1" fill="#c4c4c4"/><rect x="216.9" y="23.400000000000002" width="1" height="1" fill="#c4c4c4"/><path d="M2.2 32.5 H9 M5.6 29.1 V35.9" stroke="#d0d0d0" stroke-width="0.9"/><path d="M11.1 31.4 H14.9 L13 33.6 Z" fill="#c4c4c4"/><circle cx="52" cy="32.6" r="1.3" fill="none" stroke="#8c8c8c" stroke-width="0.7"/><path d="M53 33.4 L55 34.4 M50.4 32.2 L51 33" stroke="#8c8c8c" stroke-width="0.7"/><rect x="215.4" y="30.2" width="5.4" height="5.4" rx="0.6" fill="none" stroke="#8a8a8a" stroke-width="0.6"/><circle cx="216.2" cy="34.6" r="1.2" fill="#8a8a8a"/><path d="M217.2 33.6 L219.6 31.4" stroke="#8a8a8a" stroke-width="0.6"/><path d="M18.099999999999998 41.6 H22.3 L20.2 44.800000000000004 Z" fill="#757575"/><circle cx="27.5" cy="42.6" r="3.5" fill="#e6e6e6"/><path d="M27.5 42.6 L27.5 39.4 M27.5 42.6 L24.6 44.4 M27.5 42.6 L30.4 44.4" stroke="#2c2c2c" stroke-width="1.1"/><path d="M26.1 40.4 L27.5 39.3 L28.9 40.4 M24.7 43 L24.7 44.6 L26.2 45.2 M30.3 43 L30.3 44.6 L28.8 45.2" stroke="#2c2c2c" stroke-width="0.5" fill="none"/><rect x="217.8" y="40.0" width="1" height="1" fill="#c4c4c4"/><rect x="217.8" y="42.1" width="1" height="1" fill="#c4c4c4"/><rect x="217.8" y="44.2" width="1" height="1" fill="#c4c4c4"/><g transform="translate(31.3,48.300000000000004)" fill="none" stroke="#c8c8c8" stroke-width="0.6" stroke-linejoin="round"><path d="M3.5 0.3 L6.7 1.9 V5.5 L3.5 7.1 L0.3 5.5 V1.9 Z"/><path d="M0.3 1.9 L3.5 3.5 L6.7 1.9 M3.5 3.5 V7.1"/></g><g transform="translate(31.3,56.92)" fill="none" stroke="#c8c8c8" stroke-width="0.6" stroke-linejoin="round"><path d="M3.5 0.3 L6.7 1.9 V5.5 L3.5 7.1 L0.3 5.5 V1.9 Z"/><path d="M0.3 1.9 L3.5 3.5 L6.7 1.9 M3.5 3.5 V7.1"/></g><g transform="translate(31.3,65.53999999999999)" fill="none" stroke="#c8c8c8" stroke-width="0.6" stroke-linejoin="round"><path d="M3.5 0.3 L6.7 1.9 V5.5 L3.5 7.1 L0.3 5.5 V1.9 Z"/><path d="M0.3 1.9 L3.5 3.5 L6.7 1.9 M3.5 3.5 V7.1"/></g><g transform="translate(31.3,74.16)" fill="none" stroke="#c8c8c8" stroke-width="0.6" stroke-linejoin="round"><path d="M3.5 0.3 L6.7 1.9 V5.5 L3.5 7.1 L0.3 5.5 V1.9 Z"/><path d="M0.3 1.9 L3.5 3.5 L6.7 1.9 M3.5 3.5 V7.1"/></g><g transform="translate(39.2,82.78)" fill="none" stroke="#c8c8c8" stroke-width="0.6" stroke-linejoin="round"><path d="M3.5 0.3 L6.7 1.9 V5.5 L3.5 7.1 L0.3 5.5 V1.9 Z"/><path d="M0.3 1.9 L3.5 3.5 L6.7 1.9 M3.5 3.5 V7.1"/></g><g transform="translate(31.3,91.39999999999999)" fill="none" stroke="#c8c8c8" stroke-width="0.6" stroke-linejoin="round"><path d="M3.5 0.3 L6.7 1.9 V5.5 L3.5 7.1 L0.3 5.5 V1.9 Z"/><path d="M0.3 1.9 L3.5 3.5 L6.7 1.9 M3.5 3.5 V7.1"/></g><g transform="translate(31.3,100.02)" fill="none" stroke="#c8c8c8" stroke-width="0.6" stroke-linejoin="round"><path d="M3.5 0.3 L6.7 1.9 V5.5 L3.5 7.1 L0.3 5.5 V1.9 Z"/><path d="M0.3 1.9 L3.5 3.5 L6.7 1.9 M3.5 3.5 V7.1"/></g><g transform="translate(31.3,108.63999999999999)" fill="none" stroke="#c8c8c8" stroke-width="0.6" stroke-linejoin="round"><path d="M3.5 0.3 L6.7 1.9 V5.5 L3.5 7.1 L0.3 5.5 V1.9 Z"/><path d="M0.3 1.9 L3.5 3.5 L6.7 1.9 M3.5 3.5 V7.1"/></g><g transform="translate(31.3,117.25999999999999)" fill="none" stroke="#c8c8c8" stroke-width="0.6" stroke-linejoin="round"><path d="M3.5 0.3 L6.7 1.9 V5.5 L3.5 7.1 L0.3 5.5 V1.9 Z"/><path d="M0.3 1.9 L3.5 3.5 L6.7 1.9 M3.5 3.5 V7.1"/></g><g transform="translate(31.3,125.88)" fill="none" stroke="#c8c8c8" stroke-width="0.6" stroke-linejoin="round"><path d="M3.5 0.3 L6.7 1.9 V5.5 L3.5 7.1 L0.3 5.5 V1.9 Z"/><path d="M0.3 1.9 L3.5 3.5 L6.7 1.9 M3.5 3.5 V7.1"/></g><g transform="translate(31.3,134.49999999999997)" fill="none" stroke="#c8c8c8" stroke-width="0.6" stroke-linejoin="round"><path d="M3.5 0.3 L6.7 1.9 V5.5 L3.5 7.1 L0.3 5.5 V1.9 Z"/><path d="M0.3 1.9 L3.5 3.5 L6.7 1.9 M3.5 3.5 V7.1"/></g><g transform="translate(31.3,143.11999999999998)" fill="none" stroke="#c8c8c8" stroke-width="0.6" stroke-linejoin="round"><path d="M3.5 0.3 L6.7 1.9 V5.5 L3.5 7.1 L0.3 5.5 V1.9 Z"/><path d="M0.3 1.9 L3.5 3.5 L6.7 1.9 M3.5 3.5 V7.1"/></g><g transform="translate(31.3,151.73999999999998)" fill="none" stroke="#c8c8c8" stroke-width="0.6" stroke-linejoin="round"><path d="M3.5 0.3 L6.7 1.9 V5.5 L3.5 7.1 L0.3 5.5 V1.9 Z"/><path d="M0.3 1.9 L3.5 3.5 L6.7 1.9 M3.5 3.5 V7.1"/></g><g transform="translate(31.3,160.35999999999999)" fill="none" stroke="#c8c8c8" stroke-width="0.6" stroke-linejoin="round"><path d="M3.5 0.3 L6.7 1.9 V5.5 L3.5 7.1 L0.3 5.5 V1.9 Z"/><path d="M0.3 1.9 L3.5 3.5 L6.7 1.9 M3.5 3.5 V7.1"/></g><path d="M26.1 67.39999999999999 V71.2 L28.9 69.3 Z" fill="#7c7c7c"/><path d="M25.700000000000003 76.5 H29.5 L27.6 79.30000000000001 Z" fill="#7c7c7c"/><path d="M230.6 21.4 H235.4 M230.6 22.8 H235.4 M230.6 24.2 H235.4 M231.6 20.2 V25 M233 20.2 V25 M234.4 20.2 V25" stroke="#c0c0c0" stroke-width="0.55"/><path d="M273 20.6 L275.2 22.6 L273 24.6 M275.2 22.6 H277.6" fill="none" stroke="#c4c4c4" stroke-width="0.8"/><rect x="323.8" y="21" width="7.2" height="3.6" rx="1.8" fill="#d0d0d0"/><path d="M325 22.8 H327 M326 21.8 V23.8" stroke="#282828" stroke-width="0.5"/><circle cx="329.2" cy="22.8" r="0.6" fill="#282828"/><rect x="236.4" y="30.6" width="7.6" height="7.6" fill="none" stroke="#bcbcbc" stroke-width="0.7"/><circle cx="240.2" cy="34.4" r="1.5" fill="none" stroke="#e05a28" stroke-width="0.8"/><path d="M270.2 33.3 H274.40000000000003 L272.3 35.7 Z" fill="#d0d0d0"/><g transform="translate(281.6,30.4)" fill="none" stroke="#b8b8b8" stroke-width="0.6" stroke-linejoin="round"><path d="M3.5 0.3 L6.7 1.9 V5.5 L3.5 7.1 L0.3 5.5 V1.9 Z"/><path d="M0.3 1.9 L3.5 3.5 L6.7 1.9 M3.5 3.5 V7.1"/></g><circle cx="288" cy="36.4" r="1.5" fill="none" stroke="#e05a28" stroke-width="0.8"/><path d="M310.7 33.3 H314.90000000000003 L312.8 35.7 Z" fill="#d0d0d0"/><rect x="230.4" y="30.4" width="0.8" height="8" fill="#333333"/><rect x="324.2" y="30.4" width="0.8" height="8" fill="#333333"/><rect x="328.2" y="29.3" width="11.8" height="10.3" fill="#44628a"/><rect x="340.7" y="29.3" width="7.3" height="10.3" fill="#44628a"/><path d="M331 31.6 H337 M331 33.6 H336.4 M331 35.6 H334.6 M331 37.4 H334 M331.4 32.6 V37.8 M333.2 32.6 V37.8 M335 32.6 V35.4" stroke="#f0f0f0" stroke-width="0.7" stroke-dasharray="0.9 0.5"/><path d="M335.2 34.4 L337.6 34.4 L336.9 36 L337.2 38 L336 38 L335.7 36.2 Z" fill="#ffffff"/><path d="M342.09999999999997 33.05 H346.7 L344.4 35.55 Z" fill="#e6e6e6"/><rect x="350.2" y="29.3" width="11.2" height="10.3" fill="#494949"/><rect x="362" y="29.3" width="7.8" height="10.3" fill="#444444"/><path d="M353.4 31 V37.6 M355 31 V34.6 M356.6 31 V34.2 M352.4 32.4 H358 M352.4 34.4 H355 M352.4 36.4 H354.6" stroke="#9c9c9c" stroke-width="0.5" stroke-dasharray="0.8 0.4"/><path d="M355.2 34.7 H357.6 Q359.4 34.7 359.4 36.3 Q359.4 37.9 357.6 37.9 H355.2" fill="none" stroke="#e0592a" stroke-width="1.2"/><path d="M355 34.7 H356 M355 37.9 H356" stroke="#d8d8d8" stroke-width="1.2"/><path d="M363.7 33.05 H368.3 L366 35.55 Z" fill="#8a8a8a"/><rect x="371.5" y="29.3" width="19.5" height="10.3" fill="#4e4e4e"/><path d="M373.8 30.6 V38.4 M381.6 30.6 V38.4" stroke="#c8c8c8" stroke-width="0.8"/><path d="M374.2 32.6 L376.2 34.5 L374.2 36.4 Z M381.2 32.6 L379.2 34.5 L381.2 36.4 Z" fill="#c8c8c8"/><path d="M376 34.5 H379.4 M376.6 31.6 V37.4 M378.8 31.6 V37.4" stroke="#c8c8c8" stroke-width="0.7"/><path d="M383.3 33.05 H387.90000000000003 L385.6 35.55 Z" fill="#dcdcdc"/><path d="M2.2 359.20000000000005 Q2.2 358.6 2.8000000000000003 358.6 H4.800000000000001 L5.5 359.5 H8.100000000000001 Q8.7 359.5 8.7 360.1 V363.5 Q8.7 364.0 8.100000000000001 364.0 H2.8000000000000003 Q2.2 364.0 2.2 363.5 Z" fill="#d0d0d0"/><rect x="48.3" y="358.6" width="5.4" height="5.4" rx="0.5" fill="none" stroke="#c4c4c4" stroke-width="0.7"/><path d="M49.6 360.4 H52.6 M49.6 361.4 H52.6 M49.6 362.6 H52.6" stroke="#c4c4c4" stroke-width="0.55"/><rect x="48.3" y="358.6" width="1.3" height="5.4" fill="#c4c4c4"/><path d="M2.2 371.5 H9 M5.6 368.1 V374.9" stroke="#d0d0d0" stroke-width="0.9"/><path d="M11.1 370.4 H14.9 L13 372.6 Z" fill="#c4c4c4"/><path d="M1.0 380.20000000000005 H5.0 L3 383.20000000000005 Z" fill="#686868"/><path d="M11.5 378.70000000000005 L12.4 380.8 L14.6 381.0 L12.9 382.40000000000003 L13.5 384.6 L11.5 383.40000000000003 L9.5 384.6 L10.1 382.40000000000003 L8.4 381.0 L10.6 380.8 Z" fill="#d0d0d0"/><circle cx="18.099999999999998" cy="389.5" r="2" fill="none" stroke="#c0c0c0" stroke-width="0.7"/><path d="M19.599999999999998 391.0 L21.9 393.3" stroke="#c0c0c0" stroke-width="1" stroke-linecap="round"/><circle cx="18.099999999999998" cy="398.09999999999997" r="2" fill="none" stroke="#c0c0c0" stroke-width="0.7"/><path d="M19.599999999999998 399.59999999999997 L21.9 401.9" stroke="#c0c0c0" stroke-width="1" stroke-linecap="round"/><circle cx="18.099999999999998" cy="406.7" r="2" fill="none" stroke="#c0c0c0" stroke-width="0.7"/><path d="M19.599999999999998 408.2 L21.9 410.5" stroke="#c0c0c0" stroke-width="1" stroke-linecap="round"/><circle cx="18.099999999999998" cy="415.29999999999995" r="2" fill="none" stroke="#c0c0c0" stroke-width="0.7"/><path d="M19.599999999999998 416.79999999999995 L21.9 419.09999999999997" stroke="#c0c0c0" stroke-width="1" stroke-linecap="round"/><circle cx="18.099999999999998" cy="423.9" r="2" fill="none" stroke="#c0c0c0" stroke-width="0.7"/><path d="M19.599999999999998 425.4 L21.9 427.7" stroke="#c0c0c0" stroke-width="1" stroke-linecap="round"/><circle cx="18.099999999999998" cy="432.5" r="2" fill="none" stroke="#c0c0c0" stroke-width="0.7"/><path d="M19.599999999999998 434.0 L21.9 436.3" stroke="#c0c0c0" stroke-width="1" stroke-linecap="round"/><path d="M1.0 449.00000000000006 H5.0 L3 452.00000000000006 Z" fill="#686868"/><path d="M8.1 448.3 H10.7 L11.399999999999999 449.1 H13.899999999999999 V450.0 H9.5 L8.1 452.8  Z" fill="#d0d0d0"/><path d="M9.9 450.6 H15.7 L14.1 453.40000000000003 H8.299999999999999 Z" fill="#d0d0d0"/><path d="M15.7 457.20000000000005 Q15.7 456.6 16.3 456.6 H18.3 L19.0 457.5 H21.6 Q22.2 457.5 22.2 458.1 V461.5 Q22.2 462.0 21.6 462.0 H16.3 Q15.7 462.0 15.7 461.5 Z" fill="#c8c8c8"/><path d="M15.7 465.80000000000007 Q15.7 465.20000000000005 16.3 465.20000000000005 H18.3 L19.0 466.1 H21.6 Q22.2 466.1 22.2 466.70000000000005 V470.1 Q22.2 470.6 21.6 470.6 H16.3 Q15.7 470.6 15.7 470.1 Z" fill="#c8c8c8"/><path d="M15.7 474.4000000000001 Q15.7 473.80000000000007 16.3 473.80000000000007 H18.3 L19.0 474.70000000000005 H21.6 Q22.2 474.70000000000005 22.2 475.30000000000007 V478.70000000000005 Q22.2 479.20000000000005 21.6 479.20000000000005 H16.3 Q15.7 479.20000000000005 15.7 478.70000000000005 Z" fill="#c8c8c8"/><path d="M15.7 483.00000000000006 Q15.7 482.40000000000003 16.3 482.40000000000003 H18.3 L19.0 483.3 H21.6 Q22.2 483.3 22.2 483.90000000000003 V487.3 Q22.2 487.8 21.6 487.8 H16.3 Q15.7 487.8 15.7 487.3 Z" fill="#c8c8c8"/><path d="M1.0 492.00000000000006 H5.0 L3 495.00000000000006 Z" fill="#686868"/><path d="M8.1 491.3 H10.7 L11.399999999999999 492.1 H13.899999999999999 V493.0 H9.5 L8.1 495.8  Z" fill="#d0d0d0"/><path d="M9.9 493.6 H15.7 L14.1 496.40000000000003 H8.299999999999999 Z" fill="#d0d0d0"/><path d="M15.7 500.20000000000005 Q15.7 499.6 16.3 499.6 H18.3 L19.0 500.5 H21.6 Q22.2 500.5 22.2 501.1 V504.5 Q22.2 505.0 21.6 505.0 H16.3 Q15.7 505.0 15.7 504.5 Z" fill="#c8c8c8"/><path d="M9.2 500.40000000000003 V504.2 L12.0 502.3 Z" fill="#7c7c7c"/><path d="M15.7 508.80000000000007 Q15.7 508.20000000000005 16.3 508.20000000000005 H18.3 L19.0 509.1 H21.6 Q22.2 509.1 22.2 509.70000000000005 V513.1 Q22.2 513.6 21.6 513.6 H16.3 Q15.7 513.6 15.7 513.1 Z" fill="#c8c8c8"/><path d="M9.2 509.00000000000006 V512.8000000000001 L12.0 510.90000000000003 Z" fill="#7c7c7c"/><path d="M15.7 517.4000000000001 Q15.7 516.8000000000001 16.3 516.8000000000001 H18.3 L19.0 517.7 H21.6 Q22.2 517.7 22.2 518.3000000000001 V521.7 Q22.2 522.2 21.6 522.2 H16.3 Q15.7 522.2 15.7 521.7 Z" fill="#c8c8c8"/><path d="M9.2 517.6 V521.4 L12.0 519.5 Z" fill="#7c7c7c"/><path d="M15.7 526.0 Q15.7 525.4 16.3 525.4 H18.3 L19.0 526.3 H21.6 Q22.2 526.3 22.2 526.9 V530.3 Q22.2 530.8 21.6 530.8 H16.3 Q15.7 530.8 15.7 530.3 Z" fill="#c8c8c8"/><path d="M9.2 526.1999999999999 V529.9999999999999 L12.0 528.0999999999999 Z" fill="#7c7c7c"/><path d="M15.7 534.6 Q15.7 534.0 16.3 534.0 H18.3 L19.0 534.9 H21.6 Q22.2 534.9 22.2 535.5 V538.9 Q22.2 539.4 21.6 539.4 H16.3 Q15.7 539.4 15.7 538.9 Z" fill="#c8c8c8"/><path d="M9.2 534.8 V538.5999999999999 L12.0 536.6999999999999 Z" fill="#7c7c7c"/><path d="M15.7 543.2 Q15.7 542.6 16.3 542.6 H18.3 L19.0 543.5 H21.6 Q22.2 543.5 22.2 544.1 V547.5 Q22.2 548.0 21.6 548.0 H16.3 Q15.7 548.0 15.7 547.5 Z" fill="#c8c8c8"/><path d="M9.2 543.4 V547.1999999999999 L12.0 545.3 Z" fill="#7c7c7c"/><path d="M15.7 551.8000000000001 Q15.7 551.2 16.3 551.2 H18.3 L19.0 552.1 H21.6 Q22.2 552.1 22.2 552.7 V556.1 Q22.2 556.6 21.6 556.6 H16.3 Q15.7 556.6 15.7 556.1 Z" fill="#c8c8c8"/><path d="M9.2 552.0 V555.8 L12.0 553.9 Z" fill="#7c7c7c"/><path d="M105.39999999999999 383.09999999999997 H108.8 L107.1 380.7 Z" fill="#d0d0d0"/><path d="M128.3 396.9 H155.9 L164.4 405.4 V440 Q164.4 443 161.4 443 H128.3 Q125.3 443 125.3 440 V399.9 Q125.3 396.9 128.3 396.9 Z" fill="#ebebeb"/><text x="144.7" y="435.3" font-family="Liberation Sans, sans-serif" font-weight="700" font-size="41" fill="#2a6b2c" stroke="#2a6b2c" stroke-width="0.9" text-anchor="middle">#</text><path d="M186.6 396.9 H214.2 L222.7 405.4 V440 Q222.7 443 219.7 443 H186.6 Q183.6 443 183.6 440 V399.9 Q183.6 396.9 186.6 396.9 Z" fill="#ebebeb"/><text x="203.0" y="435.3" font-family="Liberation Sans, sans-serif" font-weight="700" font-size="41" fill="#2a6b2c" stroke="#2a6b2c" stroke-width="0.9" text-anchor="middle">#</text><path d="M531 27.8 L533.4 26.1 L536.7 28.7 L539.7 24.6 L542.1 25.7 V33.9 L539.7 35 L536.7 30.9 L533.4 33.5 L531 31.8 Z M532.9 28.6 V31 L534.2 29.8 Z M539.9 27.9 L537.6 29.8 L539.9 31.7 Z" fill="#e4e4e4" fill-rule="evenodd"/><path d="M900 24.6 V36" stroke="#3a3a3a" stroke-width="0.7"/><circle cx="913.2" cy="28.8" r="2.3" fill="none" stroke="#d8d8d8" stroke-width="0.7"/><path d="M911.6 30.6 L908.8 33.4" stroke="#d8d8d8" stroke-width="0.8"/><path d="M923.0 29.25 H926.2 L924.6 31.15 Z" fill="#d8d8d8"/><path d="M991 30.4 H997.2" stroke="#e0e0e0" stroke-width="0.7"/><rect x="1016.4" y="27.6" width="5.6" height="5.6" rx="0.8" fill="none" stroke="#e0e0e0" stroke-width="0.7"/><rect x="530.6" y="45.4" width="0.7" height="0.7" fill="#555555"/><rect x="532.6" y="45.4" width="0.7" height="0.7" fill="#4a4a4a" opacity="0.6"/><rect x="531.8000000000001" y="46.65" width="0.7" height="0.7" fill="#555555"/><rect x="532.6" y="46.65" width="0.7" height="0.7" fill="#4a4a4a" opacity="0.6"/><rect x="530.6" y="47.9" width="0.7" height="0.7" fill="#555555"/><rect x="532.6" y="47.9" width="0.7" height="0.7" fill="#4a4a4a" opacity="0.6"/><rect x="531.8000000000001" y="49.15" width="0.7" height="0.7" fill="#555555"/><rect x="532.6" y="49.15" width="0.7" height="0.7" fill="#4a4a4a" opacity="0.6"/><rect x="530.6" y="50.4" width="0.7" height="0.7" fill="#555555"/><rect x="532.6" y="50.4" width="0.7" height="0.7" fill="#4a4a4a" opacity="0.6"/><rect x="531.8000000000001" y="51.65" width="0.7" height="0.7" fill="#555555"/><rect x="532.6" y="51.65" width="0.7" height="0.7" fill="#4a4a4a" opacity="0.6"/><rect x="530.6" y="52.9" width="0.7" height="0.7" fill="#555555"/><rect x="532.6" y="52.9" width="0.7" height="0.7" fill="#4a4a4a" opacity="0.6"/><rect x="531.8000000000001" y="54.15" width="0.7" height="0.7" fill="#555555"/><rect x="532.6" y="54.15" width="0.7" height="0.7" fill="#4a4a4a" opacity="0.6"/><circle cx="541.1" cy="50.2" r="3.5" fill="none" stroke="#3d8fd4" stroke-width="0.9"/><path d="M543 50.2 H539.4 M540.8 48.6 L539.2 50.2 L540.8 51.8" fill="none" stroke="#3d8fd4" stroke-width="0.8"/><path d="M548.6 49.55 H551.8000000000001 L550.2 51.45 Z" fill="#d8d8d8"/><circle cx="559" cy="50.2" r="3.3" fill="none" stroke="#484848" stroke-width="0.8"/><path d="M557.2 50.2 H560.6 M559.4 48.8 L560.8 50.2 L559.4 51.6" fill="none" stroke="#484848" stroke-width="0.7"/><path d="M567 45 V55.4" stroke="#3c3c3c" stroke-width="0.7"/><rect x="573.6" y="46.4" width="6.2" height="6" fill="none" stroke="#c8c8c8" stroke-width="0.7"/><rect x="572" y="48.2" width="5.4" height="6" fill="#1f1f1f" stroke="#c8c8c8" stroke-width="0.7"/><rect x="574.8" y="49.6" width="3.6" height="4.4" fill="#1f1f1f" stroke="#a8a8a8" stroke-width="0.6"/><circle cx="572.4" cy="46.4" r="1.4" fill="#d8b25c"/><path d="M582.6999999999999 49.55 H585.9 L584.3 51.45 Z" fill="#d8d8d8"/><path d="M589.2 48 H592 L592.8 49 H596 V53.8 H589.2 Z" fill="#d6b46a"/><path d="M590.4 51 H597.4 L596 53.8 H589.2 Z" fill="#c49a48"/><path d="M594 48.2 Q595 46.6 597 46.6 M595.8 45.8 L597.4 46.6 L596.2 47.9" fill="none" stroke="#3d8fd4" stroke-width="0.8"/><path d="M601.4 46.4 H607.4 L608.8 47.8 V54.4 H601.4 Z" fill="none" stroke="#3d8fd4" stroke-width="0.9"/><rect x="603" y="46.6" width="3.6" height="2.4" fill="none" stroke="#3d8fd4" stroke-width="0.7"/><rect x="602.8" y="51" width="4.6" height="3.2" fill="#3d8fd4"/><path d="M613.6 46.2 H619 L620.4 47.6 V53.2 M612.2 47.8 H617.6 L618.8 49 V54.6 H612.2 Z" fill="none" stroke="#3d8fd4" stroke-width="0.9"/><rect x="613.6" y="51.6" width="3.8" height="2.8" fill="#3d8fd4"/><rect x="613.8" y="48" width="2.8" height="1.6" fill="none" stroke="#3d8fd4" stroke-width="0.6"/><path d="M624.4 45 V55.4" stroke="#3c3c3c" stroke-width="0.7"/><path d="M629.6 47 V50.2 H632.8 M629.8 50 Q631.6 46.6 634.4 48 Q637 50 633.6 53 L632 54.4" fill="none" stroke="#4e4e4e" stroke-width="0.8"/><path d="M640.8 49.55 H644.0 L642.4 51.45 Z" fill="#505050"/><path d="M654.4 47 V50.2 H651.2 M654.2 50 Q652.4 46.6 649.6 48 Q647 50 650.4 53 L652 54.4" fill="none" stroke="#4e4e4e" stroke-width="0.8"/><path d="M659.8 49.55 H663.0 L661.4 51.45 Z" fill="#505050"/><path d="M666.5 45 V55.4" stroke="#3c3c3c" stroke-width="0.7"/><path d="M700.3 49.55 H703.5 L701.9 51.45 Z" fill="#d8d8d8"/><path d="M762.8 49.55 H766.0 L764.4 51.45 Z" fill="#d8d8d8"/><path d="M773.6 46.4 V54.2 L779.2 50.3 Z" fill="#5ec45e"/><path d="M826.6 49.55 H829.8000000000001 L828.2 51.45 Z" fill="#d8d8d8"/><path d="M834.4 46.8 V53.8 L839.8 50.3 Z" fill="none" stroke="#4fae4f" stroke-width="0.8"/><path d="M849.6 47 Q853.6 49.6 852.6 52.4 Q851.8 54.6 849.4 54.6 Q846.8 54.4 846.6 52 Q846.6 50 848.4 49 Q848 50.8 849.4 51 Q850.4 49 849.6 47 Z" fill="none" stroke="#484848" stroke-width="0.8"/><path d="M856.0 49.55 H859.2 L857.6 51.45 Z" fill="#505050"/><path d="M862.6 45 V55.4" stroke="#3c3c3c" stroke-width="0.7"/><path d="M866.6 47.4 H869.6 L870.4 48.4 H873.6 V53.6 H866.6 Z" fill="#d6b46a"/><circle cx="873" cy="51.6" r="1.7" fill="#1f1f1f" stroke="#3d8fd4" stroke-width="0.8"/><path d="M871.8 52.8 L870.4 54.4" stroke="#3d8fd4" stroke-width="0.8"/><path d="M878.4 45 V55.4" stroke="#3c3c3c" stroke-width="0.7"/><rect x="882.6" y="47" width="8.2" height="6.6" fill="none" stroke="#d0d0d0" stroke-width="0.8"/><path d="M882.6 49 H890.8" stroke="#d0d0d0" stroke-width="0.8"/><circle cx="884.4" cy="53" r="1.7" fill="#1f1f1f" stroke="#3d8fd4" stroke-width="0.8"/><path d="M895.6 51.2 H898.8" stroke="#d0d0d0" stroke-width="0.7"/><path d="M895.6 52.25 H898.8000000000001 L897.2 54.150000000000006 Z" fill="#d8d8d8"/><rect x="901.8" y="45.4" width="0.7" height="0.7" fill="#555555"/><rect x="903.0" y="46.65" width="0.7" height="0.7" fill="#555555"/><rect x="901.8" y="47.9" width="0.7" height="0.7" fill="#555555"/><rect x="903.0" y="49.15" width="0.7" height="0.7" fill="#555555"/><rect x="901.8" y="50.4" width="0.7" height="0.7" fill="#555555"/><rect x="903.0" y="51.65" width="0.7" height="0.7" fill="#555555"/><rect x="901.8" y="52.9" width="0.7" height="0.7" fill="#555555"/><rect x="903.0" y="54.15" width="0.7" height="0.7" fill="#555555"/><path d="M906.2 49.4 H913.2" stroke="#b0b0b0" stroke-width="1.6" stroke-dasharray="1.6 0.7"/><path d="M907.6 52 L909.2 53.6 L912.4 50.8" fill="none" stroke="#4fae4f" stroke-width="0.9"/><path d="M917.8 45 V55.4" stroke="#3c3c3c" stroke-width="0.7"/><path d="M922.2 46.4 V51.6 L926 49.6 Z" fill="#3d8fd4"/><rect x="924" y="51.6" width="6.6" height="2.6" fill="#c8c8c8"/><path d="M934.6 49 Q933.4 50.8 934.6 52.6" fill="none" stroke="#3d8fd4" stroke-width="0.9"/><path d="M936 47.2 H941.6 M937.4 47.2 V54.4 M939.4 47.2 V54.4 M941.4 49 V54.4" stroke="#c8c8c8" stroke-width="0.9" fill="none"/><path d="M946 45 V55.4" stroke="#3c3c3c" stroke-width="0.7"/><path d="M950.6 48 H956.6 V54" fill="none" stroke="#8a8a8a" stroke-width="0.7"/><rect x="951.6" y="49.6" width="4.4" height="4.6" fill="#4fae4f"/><path d="M961 46.8 L964 49.8 M962.6 46.6 H964.4 V48.4" stroke="#3d8fd4" stroke-width="0.8" fill="none"/><rect x="964" y="49" width="4.8" height="5.2" fill="#9a9a9a"/><path d="M962.4 51 H964" stroke="#3d8fd4" stroke-width="0.7"/><rect x="973.4" y="46.4" width="0.9" height="0.9" fill="#d0d0d0"/><rect x="976" y="46.4" width="0.9" height="0.9" fill="#d0d0d0"/><path d="M973.2 51.4 H977.2" stroke="#d0d0d0" stroke-width="0.7"/><path d="M973.8000000000001 52.6 H976.6 L975.2 54.199999999999996 Z" fill="#d0d0d0"/><path d="M984.4 49.6 Q984 46.8 986.4 47 Q987.6 47.2 987.6 48.6 Q987.8 47 989.4 47 Q991.4 47.2 991 49.6 Q992.6 51.6 991 53.4 Q988 55 985 53.6 Q983.2 52 984.4 49.6 Z" fill="none" stroke="#e0e0e0" stroke-width="0.8"/><circle cx="989.6" cy="53.4" r="1.4" fill="#0c0c0c"/><path d="M569.8 69.8 H571.4 M571.4 68.4 V71.2 M571.4 69 H573.4 Q574.2 69.8 573.4 70.6 H571.4" fill="none" stroke="#d0d0d0" stroke-width="0.6"/><path d="M579.4 67.8 L583.6 72.2 M583.6 67.8 L579.4 72.2" stroke="#f0f0f0" stroke-width="0.8"/><rect x="530.8" y="78.8" width="7" height="5.6" fill="none" stroke="#d0d0d0" stroke-width="0.7"/><path d="M530.8 80.4 H537.8" stroke="#d0d0d0" stroke-width="0.7"/><circle cx="531.6" cy="84.4" r="1.5" fill="#8a5fc0"/><path d="M693.4 81.45 H696.6 L695 83.35000000000001 Z" fill="#d8d8d8"/><path d="M698.6 76.8 V87.8 M870.4 76.8 V87.8" stroke="#2c2c2c" stroke-width="1.5"/><path d="M704.2 80 L706 78.8 L707.6 80.2 L706 81.6 Z M707.4 80.2 H709.4 V82.4 H711 M709.4 84.4 H711" fill="none" stroke="#d8a24a" stroke-width="0.7"/><circle cx="705" cy="83.6" r="1.1" fill="none" stroke="#d8a24a" stroke-width="0.6"/><path d="M864.8 81.45 H868.0 L866.4 83.35000000000001 Z" fill="#d8d8d8"/><path d="M877.4 78.6 L880.2 80 V83.2 L877.4 84.6 L874.6 83.2 V80 Z M874.6 80 L877.4 81.4 L880.2 80 M877.4 81.4 V84.6" fill="none" stroke="#a06ad0" stroke-width="0.7"/><rect x="879" y="83.2" width="3" height="2.4" fill="#d8d8d8"/><path d="M879.8 83.2 V82.4 Q880.5 81.6 881.2 82.4 V83.2" fill="none" stroke="#d8d8d8" stroke-width="0.5"/><path d="M613.8 92.2 L617 95.39999999999999 L620.2 92.2" fill="none" stroke="#d0d0d0" stroke-width="0.9"/><path d="M613.8 142.28 L617 145.48 L620.2 142.28" fill="none" stroke="#d0d0d0" stroke-width="0.9"/><path d="M613.8 242.44000000000003 L617 245.64000000000001 L620.2 242.44000000000003" fill="none" stroke="#d0d0d0" stroke-width="0.9"/><path d="M613.8 317.55999999999995 L617 320.76 L620.2 317.55999999999995" fill="none" stroke="#d0d0d0" stroke-width="0.9"/><path d="M617 98.3 V123.94 H619.6" fill="none" stroke="#5a5a5a" stroke-width="0.7"/><path d="M617 148.38 V239.54000000000002 M617 248.54000000000002 V314.65999999999997 M617 323.65999999999997 V369.74 H619.6 M617 288.22 H619.6" fill="none" stroke="#5a5a5a" stroke-width="0.7"/><path d="M629.4 162.42000000000002 V362.74" stroke="#808080" stroke-width="0.7" stroke-dasharray="1.4 1"/><path d="M650.6 262.58 V274.58 M650.6 337.7 V349.7" stroke="#6a6a6a" stroke-width="0.6" stroke-dasharray="1.4 1"/><rect x="626.4" y="288.12" width="420" height="11" fill="none" stroke="#5a5a5a" stroke-width="0.8"/><path d="M648.5 288.22 V299.02" stroke="#e8e8e8" stroke-width="0.8"/><rect x="543" y="140.78" width="5.4" height="5.4" rx="0.6" fill="#3d8fd4"/><circle cx="545.7" cy="143.48" r="1.5" fill="none" stroke="#dff0ff" stroke-width="0.6"/><path d="M551.4 146.38 V141.18 M550 142.57999999999998 L551.4 140.98 L552.8 142.57999999999998" fill="none" stroke="#e8e8e8" stroke-width="0.8"/><g transform="translate(599.2,294.22) rotate(-42)"><rect x="-5.6" y="-1.5" width="5.2" height="3" rx="1.1" fill="#2a5d8c" stroke="#4a9be0" stroke-width="0.6"/><path d="M-4 -1.4 V1.4 M-2.6 -1.4 V1.4" stroke="#4a9be0" stroke-width="0.4"/><rect x="-0.4" y="-0.5" width="4.6" height="1" fill="#c8c8c8"/><path d="M4.2 -0.9 L6.2 -0.5 V0.5 L4.2 0.9 Z" fill="#c8c8c8"/></g><rect x="781.0" y="273.38" width="0.9" height="0.8" fill="#a0a0a0"/><rect x="782.9" y="273.38" width="0.9" height="0.8" fill="#a0a0a0"/><rect x="784.8" y="273.38" width="0.9" height="0.8" fill="#a0a0a0"/><path d="M554.0 435.05 H557.2 L555.6 436.95 Z" fill="#d8d8d8"/><path d="M564.6 439 Q563 434 566.4 432.6 Q569.4 432.4 569.6 435.6 Q569.4 438.4 566.8 439 Z" fill="#6a48a8"/><path d="M565.6 438.6 Q565 435 567.2 433.6" stroke="#9a78d8" stroke-width="0.5" fill="none"/><circle cx="587.1" cy="435.7" r="2.9" fill="#5cc45c"/><path d="M585.6 435.8 L586.7 436.9 L588.7 434.6" fill="none" stroke="#1e1e1e" stroke-width="0.7"/><path d="M669.9 432.2 V439.6" stroke="#bcbcbc" stroke-width="0.8"/><path d="M678 439 L680.4 435.6 L682.4 437 L680.4 439.6 Z" fill="#d8b25c"/><path d="M681.4 436 L684.2 432.4" stroke="#d0d0d0" stroke-width="0.8"/><path d="M678.4 433.4 L680 434.6 M679.6 432.4 L680.6 433.8" stroke="#d0d0d0" stroke-width="0.5"/><path d="M686.8 435.05 H690.0 L688.4 436.95 Z" fill="#d8d8d8"/><path d="M708.4 433.8 V437.8 L706 435.8 Z" fill="#b8b8b8"/><path d="M940.6 433.8 V437.8 L943 435.8 Z" fill="#b8b8b8"/><rect x="712.4" y="433.2" width="170.4" height="5.2" fill="#4d4d4d"/><path d="M527.4 446 H535.8 V452.6 H532.8 L531.6 454 L530.4 452.6 H527.4 Z" fill="none" stroke="#e0e0e0" stroke-width="0.7"/><path d="M884.2 453.2 V447 M882 449.2 L884.2 446.8 L886.4 449.2" fill="none" stroke="#e0e0e0" stroke-width="0.7"/><path d="M941.2 451.3 H944.8 L943 449.09999999999997 Z" fill="#e8e8e8"/><rect x="958.6" y="447" width="6.2" height="6.2" fill="none" stroke="#e0e0e0" stroke-width="0.7"/><path d="M958.6 448.8 H964.8 M960.4 450.8 H963" stroke="#e0e0e0" stroke-width="0.7"/><path d="M1014.4000000000001 451.3 H1018.0 L1016.2 449.09999999999997 Z" fill="#e8e8e8"/></svg>
</div>
</body></html>
